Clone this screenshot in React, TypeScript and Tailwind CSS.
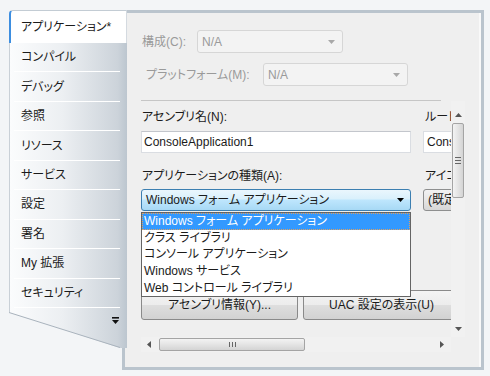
import React from "react";

const tabs = ["コンパイル", "デバッグ", "参照", "リソース", "サービス", "設定", "署名", "My 拡張", "セキュリティ"];
const items = ["クラス ライブラリ", "コンソール アプリケーション", "Windows サービス", "Web コントロール ライブラリ"];

function Arrow({ color = "#4a4a4a", dir = "down" }: { color?: string; dir?: "down" | "up" | "left" | "right" }) {
  const pts: Record<string, string> = {
    down: "0,0 7,0 3.5,4",
    up: "0,4 7,4 3.5,0",
    left: "4,0 4,7 0,3.5",
    right: "0,0 0,7 4,3.5",
  };
  const vertical = dir === "down" || dir === "up";
  return (
    <svg width={vertical ? 7 : 4} height={vertical ? 4 : 7} viewBox={vertical ? "0 0 7 4" : "0 0 4 7"}>
      <polygon points={pts[dir]} fill={color} />
    </svg>
  );
}

function DisabledCombo({ w }: { w: string }) {
  return (
    <div className={`${w} h-[23px] rounded-[3px] border border-[#d6d6d6] bg-[#f3f3f3] flex items-center pl-[4px] pr-[7px] text-[#9a9a9a]`}>
      <span className="flex-1">N/A</span>
      <Arrow color="#a8a8a8" />
    </div>
  );
}

export default function App() {
  return (
    <div className="w-[490px] h-[376px] bg-[#f3f5f7] flex pt-[10px] pl-[9px] text-[12px] leading-[16px] text-[#1b1b1b] font-['Liberation_Sans','Noto_Sans_CJK_JP',sans-serif] [font-feature-settings:'palt'] overflow-hidden">
      {/* tab strip */}
      <div className="w-[118px] flex flex-col relative z-10 shrink-0">
        <div className="h-[33px] bg-white rounded-tl-[4px] border-t border-t-[#c3ccd4] border-l-[2px] border-l-[#3d8ee0] border-r border-r-[#d4dae0] flex items-center pl-[10px]">
          アプリケーション*
        </div>
        <div className="flex flex-col bg-[linear-gradient(to_right,#fbfcfd_0%,#eceff2_45%,#ccd3da_92%,#bcc6cf_100%)] border-l border-l-[#c9d0d7]">
          {tabs.map((t) => (
            <div key={t} className="flex flex-col">
              <div className="h-[28.45px] flex items-center pl-[11px]">{t}</div>
              <div className="h-px mx-[4px] mr-[7px] bg-white" />
            </div>
          ))}
        </div>
        <svg width="118" height="44" viewBox="0 0 118 44" className="block">
          <defs>
            <linearGradient id="tg" x1="0" x2="1" y1="0" y2="0">
              <stop offset="0" stopColor="#fbfcfd" />
              <stop offset="0.45" stopColor="#eceff2" />
              <stop offset="0.92" stopColor="#ccd3da" />
              <stop offset="1" stopColor="#bcc6cf" />
            </linearGradient>
          </defs>
          <polygon points="0,0 118,0 118,40 111,40 0,4" fill="url(#tg)" />
          <line x1="0.5" y1="0" x2="0.5" y2="4" stroke="#c9d0d7" />
          <line x1="0" y1="4.5" x2="111" y2="39.5" stroke="#a9b3bd" />
          <rect x="103" y="9" width="7" height="1.6" fill="#111" />
          <polygon points="103,12 110,12 106.5,16" fill="#111" />
        </svg>
      </div>

      {/* content panel */}
      <div className="ml-[-5px] w-[362px] h-[360px] shrink-0 border-[3px] border-[#bac4cd] bg-[#efefef] shadow-[inset_-2px_0_0_#f9f9f9] flex flex-col pl-[16px] pt-[17px]">
        <div className="flex items-center h-[23px] text-[#9a9a9a]">
          <span className="w-[56px] pl-[1px]">構成(C):</span>
          <DisabledCombo w="w-[146px]" />
        </div>
        <div className="flex items-center h-[23px] mt-[10px] text-[#9a9a9a]">
          <span className="w-[122px] pl-[5px]">プラットフォーム(M):</span>
          <DisabledCombo w="w-[145px]" />
        </div>
        <div className="mt-[14px] w-[300px] h-px bg-[#c6c6c6]" />

        <div className="flex flex-col">
          <div className="flex">
            {/* scrolled content */}
            <div className="w-[310px] h-[236px] overflow-hidden relative">
              <div className="flex gap-[12px] pt-[8px] w-[420px]">
                <div className="w-[270px] flex flex-col shrink-0">
                  <div className="h-[16px] pl-[1px]">アセンブリ名(N):</div>
                  <div className="mt-[6px] h-[22px] bg-white border border-[#dadde2] border-t-[#c3c6cc] flex items-center pl-[2px]">
                    ConsoleApplication1
                  </div>
                  <div className="mt-[15px] h-[16px] pl-[1px]">アプリケーションの種類(A):</div>
                  <div className="mt-[5px] h-[22px] rounded-[3px] border border-[#3c7fb1] bg-[linear-gradient(to_bottom,#eaf6fd_0%,#d9f0fc_45%,#bee6fd_50%,#a7d9f5_100%)] flex items-center pl-[4px] pr-[6px]">
                    <span className="flex-1">Windows フォーム アプリケーション</span>
                    <Arrow color="#000" />
                  </div>
                </div>
                <div className="w-[130px] flex flex-col shrink-0 whitespace-nowrap">
                  <div className="h-[16px] pl-[2px]">ルート名前空間(O):</div>
                  <div className="mt-[6px] h-[22px] bg-white border border-[#dadde2] flex items-center pl-[3px]">
                    ConsoleApplication1
                  </div>
                  <div className="mt-[15px] h-[16px] pl-[2px]">アイコン(I):</div>
                  <div className="mt-[5px] h-[22px] rounded-[3px] border border-[#8e8f8f] bg-[linear-gradient(to_bottom,#f2f2f2,#e6e6e6_50%,#d6d6d6)] flex items-center pl-[4px]">
                    (既定のアイコン)
                  </div>
                </div>
              </div>
              <div className="flex gap-[5px] mt-[79px] w-[340px]">
                <div className="w-[157px] h-[30px] shrink-0 rounded-[3px] border border-[#8a8a8a] bg-[linear-gradient(to_bottom,#f4f4f4_0%,#ececec_50%,#dedede_51%,#d2d2d2_100%)] flex items-center justify-center">
                  アセンブリ情報(Y)...
                </div>
                <div className="w-[157px] h-[30px] shrink-0 rounded-[3px] border border-[#8a8a8a] bg-[linear-gradient(to_bottom,#f4f4f4_0%,#ececec_50%,#dedede_51%,#d2d2d2_100%)] flex items-center justify-center">
                  UAC 設定の表示(U)
                </div>
              </div>

              {/* open dropdown list */}
              <div className="absolute left-0 top-[111px] w-[270px] h-[85px] bg-white border border-[#646464] flex flex-col">
                <div className="h-[16.6px] bg-[#3399ff] text-white border border-dotted border-[#e0a060] flex items-center pl-[1px]">
                  Windows フォーム アプリケーション
                </div>
                {items.map((i) => (
                  <div key={i} className="h-[16.6px] flex items-center pl-[2px]">
                    {i}
                  </div>
                ))}
              </div>
            </div>

            {/* vertical scrollbar */}
            <div className="w-[14px] h-[236px] flex flex-col items-center pt-[12px] bg-[#f1f1f1]">
              <Arrow color="#555" dir="up" />
              <div className="mt-[6px] w-[12px] h-[75px] rounded-[2px] border border-[#a4a4a4] bg-[linear-gradient(to_right,#f3f3f3,#e4e4e4_50%,#d4d4d4)] flex flex-col items-center justify-center gap-[2px]">
                <div className="w-[6px] h-px bg-[#666]" />
                <div className="w-[6px] h-px bg-[#666]" />
                <div className="w-[6px] h-px bg-[#666]" />
              </div>
              <div className="flex-1" />
              <div className="mb-[6px]">
                <Arrow color="#555" dir="down" />
              </div>
            </div>
          </div>

          {/* horizontal scrollbar */}
          <div className="w-[310px] h-[15px] flex items-center bg-[#f1f1f1] pl-[6px] pr-[7px]">
            <Arrow color="#555" dir="left" />
            <div className="ml-[8px] w-[146px] h-[13px] rounded-[2px] border border-[#a4a4a4] bg-[linear-gradient(to_bottom,#f3f3f3,#e4e4e4_50%,#d4d4d4)] flex items-center justify-center gap-[2px]">
              <div className="w-px h-[5px] bg-[#666]" />
              <div className="w-px h-[5px] bg-[#666]" />
              <div className="w-px h-[5px] bg-[#666]" />
            </div>
            <div className="flex-1" />
            <Arrow color="#555" dir="right" />
          </div>
        </div>
      </div>
    </div>
  );
}
